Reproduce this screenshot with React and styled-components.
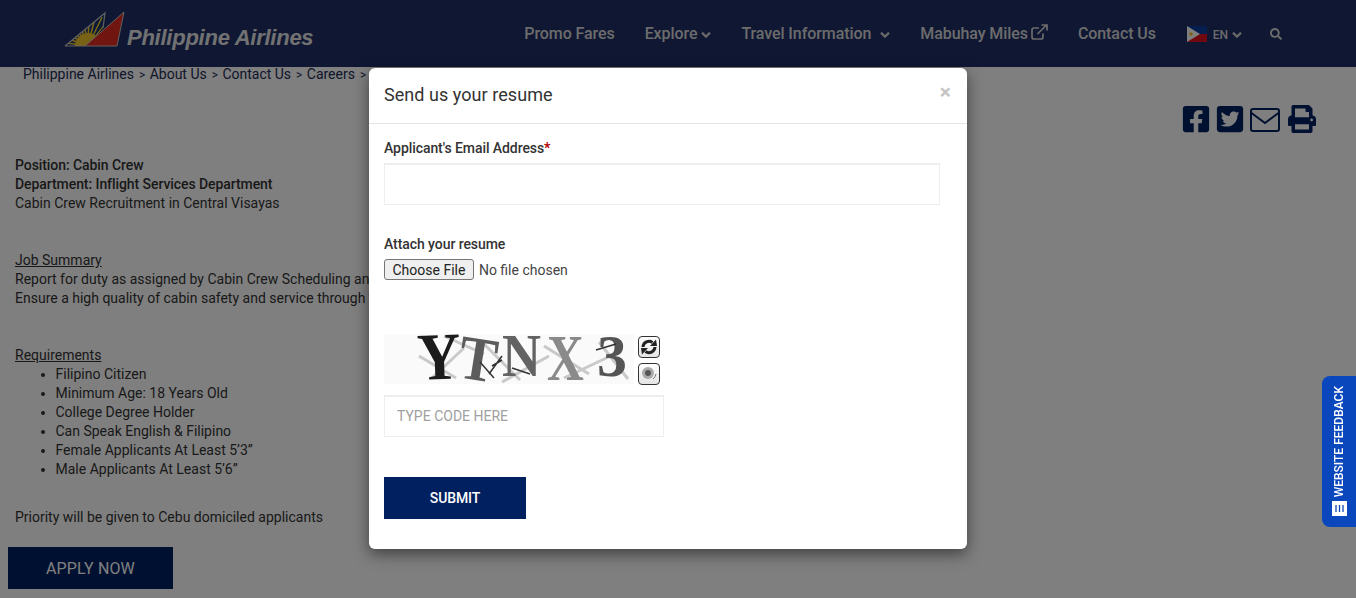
import React from "react";
import styled, { createGlobalStyle } from "styled-components";
import { FaChevronDown, FaSearch, FaFacebookSquare, FaTwitterSquare, FaPrint } from "react-icons/fa";

const GlobalStyle = createGlobalStyle`
  html, body {
    margin: 0;
    height: 100%;
    overflow: hidden;
    background: #fff;
  }
  body {
    color: #333;
    font-family: Roboto, "Liberation Sans", sans-serif;
    font-size: 14px;
    line-height: 19px;
  }
`;

const Page = styled.div`
  height: 598px;
  overflow: hidden;
  position: relative;
`;

const Header = styled.header`
  align-items: center;
  background: #1f2f66;
  display: flex;
  height: 67px;
  justify-content: space-between;
  padding: 0 74px 0 64px;
`;

const Logo = styled.div`
  align-items: flex-end;
  display: flex;
  margin-top: -9px;
`;

const LogoText = styled.span`
  color: #e4e4e4;
  font-family: "Liberation Sans", Arial, sans-serif;
  font-size: 22px;
  font-style: italic;
  font-weight: 700;
  letter-spacing: -0.25px;
  line-height: 24px;
  margin: 0 0 -3px 1px;
`;

const Nav = styled.nav`
  align-items: center;
  display: flex;
`;

const NavItem = styled.a`
  align-items: center;
  color: #d8d8d8;
  display: flex;
  font-size: 16px;
  font-weight: 500;
  letter-spacing: -0.08px;
  line-height: 22px;
  margin-left: ${props => props.$gap}px;
  white-space: nowrap;
`;

const Caret = styled(FaChevronDown)`
  font-size: 10px;
  margin-left: ${props => props.$gap || 4}px;
  margin-top: 3px;
  stroke: currentColor;
  stroke-width: 40;
`;

const Lang = styled.span`
  font-size: 12px;
  margin-left: 6px;
  margin-top: 2px;
`;

const SearchIcon = styled(FaSearch)`
  font-size: 12px;
`;

const Breadcrumb = styled.div`
  color: #222c55;
  display: flex;
  height: 19px;
  margin-top: -2px;
  padding-left: 23px;
  white-space: nowrap;
`;

const Crumb = styled.span`
  &:not(:first-child)::before {
    content: ">";
    font-size: 12px;
    margin: 0 4.4px 0 5px;
  }
`;

const ShareBar = styled.div`
  align-items: center;
  color: #002060;
  display: flex;
  gap: 4px;
  height: 30px;
  justify-content: flex-end;
  margin-top: 20px;
  padding-right: 40px;
`;

const ShareEnvelope = styled.svg`
  margin: 1px 4px 0 1px;
`;

const Article = styled.div`
  margin-top: 22px;
  padding-left: 15px;
  width: 900px;
`;

const Strong = styled.div`
  font-weight: 500;
  letter-spacing: -0.07px;
`;

const Section = styled.div`
  margin-top: ${props => props.$top}px;
`;

const Underlined = styled.div`
  text-decoration: underline;
`;

const List = styled.ul`
  list-style: disc;
  margin: 0;
  padding-left: 40.5px;
`;

const ApplyButton = styled.button`
  background: #002060;
  border: none;
  color: #fff;
  display: block;
  font-family: inherit;
  font-size: 16px;
  font-weight: 400;
  height: 42px;
  letter-spacing: 0.15px;
  margin: 20px 0 0 -7px;
  width: 165px;
`;

const Backdrop = styled.div`
  background: rgba(0, 0, 0, 0.5);
  inset: 0;
  position: absolute;
`;

const Modal = styled.div`
  background: #fff;
  border-radius: 6px;
  box-shadow: 0 5px 15px rgba(0, 0, 0, 0.5);
  height: 481px;
  left: 369px;
  position: absolute;
  top: 68px;
  width: 598px;
`;

const ModalHeader = styled.div`
  align-items: flex-start;
  border-bottom: 1px solid #e5e5e5;
  box-sizing: border-box;
  display: flex;
  height: 56px;
  justify-content: space-between;
  padding: 15px 15px 0;
`;

const Title = styled.h4`
  font-size: 18px;
  font-weight: 400;
  letter-spacing: 0.05px;
  line-height: 24px;
  margin: 0;
`;

const Close = styled.span`
  color: #c4c4c4;
  font-size: 21px;
  font-weight: 700;
  line-height: 18px;
  margin-right: 1px;
`;

const ModalBody = styled.form`
  padding: 15px;
`;

const Label = styled.label`
  color: #333;
  display: block;
  font-weight: 500;
  letter-spacing: -0.07px;
  line-height: 19px;
  margin-bottom: 5px;
`;

const Required = styled.span`
  color: #b00000;
  font-weight: 700;
`;

const TextInput = styled.input`
  border: 1px solid #eee;
  border-top-width: 2px;
  box-sizing: border-box;
  color: #333;
  display: block;
  font-family: inherit;
  font-size: 14px;
  height: 42px;
  padding: 0 12px 2px;
  width: ${props => props.$width}px;

  &::placeholder {
    color: #a0a0a0;
  }
`;

const FileInput = styled.input`
  color: #444;
  display: block;
  font-family: inherit;
  font-size: 14px;

  &::file-selector-button {
    background: #efefef;
    border: 1px solid #767676;
    border-radius: 3px;
    color: #222;
    font-family: inherit;
    font-size: 14px;
    height: 21px;
    margin-right: 5px;
    padding: 0 7.5px;
  }
`;

const CaptchaRow = styled.div`
  display: flex;
  margin: 54px 0 10px;
`;

const CaptchaButtons = styled.div`
  display: flex;
  flex-direction: column;
  gap: 5px;
  margin: 2px 0 0 4px;
`;

const CaptchaButton = styled.div`
  align-items: center;
  background: linear-gradient(#fff, #e4e4e4);
  border: 1px solid #333;
  border-radius: 4px;
  box-sizing: border-box;
  display: flex;
  height: 22px;
  justify-content: center;
  width: 22px;
`;

const SubmitButton = styled.button`
  background: #002060;
  border: none;
  color: #fff;
  display: block;
  font-family: inherit;
  font-size: 14px;
  font-weight: 500;
  height: 42px;
  letter-spacing: -0.1px;
  margin-top: 40px;
  width: 142px;
`;

const FeedbackTab = styled.div`
  align-items: center;
  background: #0a47bd;
  border-radius: 8px 0 0 8px;
  bottom: 71px;
  box-sizing: border-box;
  color: #fff;
  display: flex;
  flex-direction: column-reverse;
  gap: 4px;
  height: 151px;
  padding-bottom: 11px;
  position: absolute;
  right: 0;
  width: 34px;
`;

const FeedbackText = styled.span`
  font-size: 12px;
  font-weight: 500;
  transform: rotate(180deg);
  white-space: nowrap;
  writing-mode: vertical-rl;
`;

const rayAngles = [188, 200, 212, 224, 236, 248, 260, 272, 284, 296, 308];

const LogoMark = () => (
  <svg width="62" height="36" viewBox="0 0 62 36">
    <defs>
      <clipPath id="logo-left">
        <path d="M1 35 L41 2 L39 17 L24 35 Z" />
      </clipPath>
    </defs>
    <path d="M1 35 L41 2 L39 17 L24 35 Z" fill="#12306e" />
    <g clipPath="url(#logo-left)">
      {rayAngles.map(angle => (
        <line
          key={angle}
          x1="24"
          y1="35"
          x2={24 + 32 * Math.cos((angle * Math.PI) / 180)}
          y2={35 + 32 * Math.sin((angle * Math.PI) / 180)}
          stroke="#f1c52c"
          strokeWidth="1.6"
        />
      ))}
      <circle cx="24" cy="35" r="13" fill="#f1c52c" />
    </g>
    <path d="M1 35 L41 2 L39 17" fill="none" stroke="#c4c4c4" strokeWidth="1.2" />
    <path d="M21 35 L60 1 L53 35 Z" fill="#e32b22" stroke="#c4c4c4" strokeWidth="1" />
    <path d="M1 35 H21" stroke="#c4c4c4" strokeWidth="1" />
  </svg>
);

const Flag = () => (
  <svg width="20" height="16" viewBox="0 0 20 16">
    <rect width="20" height="8" fill="#0a3ca0" />
    <rect y="8" width="20" height="8" fill="#e01020" />
    <path d="M0 0 L13 8 L0 16 Z" fill="#fff" />
    <circle cx="4" cy="8" r="1.8" fill="#f4c22b" />
  </svg>
);

const ExternalLink = () => (
  <svg width="17" height="16" viewBox="0 0 17 16" fill="none" stroke="currentColor" strokeWidth="1.7" style={{ marginLeft: 3, marginTop: -4 }}>
    <path d="M12 9.5 V13 a2 2 0 0 1 -2 2 H3 a2 2 0 0 1 -2 -2 V6 a2 2 0 0 1 2 -2 H8" />
    <path d="M6.5 10 L15 1.5 M10.5 1 H16 V6.5" />
  </svg>
);

const EnvelopeIcon = () => (
  <ShareEnvelope width="30" height="24" viewBox="0 0 30 24" fill="none" stroke="currentColor" strokeWidth="2">
    <rect x="1" y="1" width="28" height="22" rx="2" />
    <path d="M1.5 5 L15 15 L28.5 5" />
  </ShareEnvelope>
);

const captchaLetters = [
  { char: "Y", x: 34, y: 46, sx: 1, sy: 1.12, rotate: -2, fill: "#1a1a1a" },
  { char: "T", x: 72, y: 43, sx: 0.95, sy: 1.05, rotate: 9, fill: "#5c5c5c" },
  { char: "N", x: 118, y: 42, sx: 0.9, sy: 1.02, rotate: 0, fill: "#636363" },
  { char: "X", x: 163, y: 46, sx: 0.85, sy: 1.08, rotate: 0, fill: "#8a8a8a" },
  { char: "3", x: 213, y: 42, sx: 1, sy: 0.98, rotate: 0, fill: "#555" }
];

const Captcha = () => (
  <svg width="250" height="50" viewBox="0 0 250 50" style={{ overflow: "visible" }}>
    <defs>
      <filter id="soft">
        <feGaussianBlur stdDeviation="0.4" />
      </filter>
    </defs>
    <rect width="250" height="50" fill="#fafafa" />
    <g filter="url(#soft)">
      <g stroke="#c9c9c9" strokeWidth="3" fill="none">
        <path d="M35 22 L72 44 M48 44 L80 14 M100 10 L136 46 M118 48 L165 22 M160 12 L205 40 M180 44 L235 18 M215 8 L244 45 M60 2 L100 20" />
      </g>
      <g fontFamily="Liberation Serif, serif" fontWeight="700" fontSize="60">
        {captchaLetters.map(letter => (
          <text
            key={letter.char}
            fill={letter.fill}
            transform={`translate(${letter.x} ${letter.y}) rotate(${letter.rotate}) scale(${letter.sx} ${letter.sy})`}
          >
            {letter.char}
          </text>
        ))}
      </g>
      <path d="M96 28 L110 44 M128 34 L146 40 M232 10 L212 16 M118 22 L105 40 M108 32 L118 26" stroke="#333" strokeWidth="1.5" />
    </g>
  </svg>
);

const RefreshIcon = () => (
  <svg width="18" height="18" viewBox="0 0 18 18" fill="none" stroke="#222" strokeWidth="3">
    <path d="M3 9 A6 6 0 0 1 12.5 4.5" />
    <path d="M15 9 A6 6 0 0 1 5.5 13.5" />
    <path d="M10 8 L17 8 L16 1.5 Z" fill="#222" stroke="none" />
    <path d="M8 10 L1 10 L2 16.5 Z" fill="#222" stroke="none" />
  </svg>
);

const AudioIcon = () => (
  <svg width="18" height="18" viewBox="0 0 18 18">
    <circle cx="8" cy="8" r="6" fill="#aaa" />
    <circle cx="8" cy="8" r="3" fill="#555" />
    <path d="M13 14 A8 8 0 0 0 16 9" stroke="#777" fill="none" />
  </svg>
);

const FormIcon = () => (
  <svg width="15" height="15" viewBox="0 0 15 15">
    <rect width="15" height="15" fill="#fff" />
    <path d="M4 4 V11 M7.5 4 V11 M11 4 V11" stroke="#0a47bd" strokeWidth="1.3" />
  </svg>
);

const requirements = [
  "Filipino Citizen",
  "Minimum Age: 18 Years Old",
  "College Degree Holder",
  "Can Speak English & Filipino",
  "Female Applicants At Least 5’3”",
  "Male Applicants At Least 5’6”"
];

const App = () => (
  <Page>
    <GlobalStyle />
    <Header>
      <Logo>
        <LogoMark />
        <LogoText>Philippine Airlines</LogoText>
      </Logo>
      <Nav>
        <NavItem $gap={0}>Promo Fares</NavItem>
        <NavItem $gap={30}>Explore<Caret /></NavItem>
        <NavItem $gap={30}>Travel Information<Caret $gap={9} /></NavItem>
        <NavItem $gap={30}>Mabuhay Miles<ExternalLink /></NavItem>
        <NavItem $gap={30}>Contact Us</NavItem>
        <NavItem $gap={31}><Flag /><Lang>EN</Lang><Caret /></NavItem>
        <NavItem $gap={28}><SearchIcon /></NavItem>
      </Nav>
    </Header>
    <Breadcrumb>
      <Crumb>Philippine Airlines</Crumb>
      <Crumb>About Us</Crumb>
      <Crumb>Contact Us</Crumb>
      <Crumb>Careers</Crumb>
      <Crumb>Cabin Crew</Crumb>
    </Breadcrumb>
    <ShareBar>
      <FaFacebookSquare size={30} />
      <FaTwitterSquare size={30} />
      <EnvelopeIcon />
      <FaPrint size={28} />
    </ShareBar>
    <Article>
      <Strong>Position: Cabin Crew</Strong>
      <Strong>Department: Inflight Services Department</Strong>
      <div>Cabin Crew Recruitment in Central Visayas</div>
      <Section $top={38}>
        <Underlined>Job Summary</Underlined>
        <div>Report for duty as assigned by Cabin Crew Scheduling and perform all duties on board</div>
        <div>Ensure a high quality of cabin safety and service through the flight</div>
      </Section>
      <Section $top={38}>
        <Underlined>Requirements</Underlined>
        <List>
          {requirements.map(item => (
            <li key={item}>{item}</li>
          ))}
        </List>
      </Section>
      <Section $top={29}>Priority will be given to Cebu domiciled applicants</Section>
      <ApplyButton>APPLY NOW</ApplyButton>
    </Article>
    <Backdrop />
    <Modal>
      <ModalHeader>
        <Title>Send us your resume</Title>
        <Close>×</Close>
      </ModalHeader>
      <ModalBody>
        <Label>Applicant's Email Address<Required>*</Required></Label>
        <TextInput type="text" $width={556} />
        <Section $top={30}>
          <Label>Attach your resume</Label>
          <FileInput type="file" />
        </Section>
        <CaptchaRow>
          <Captcha />
          <CaptchaButtons>
            <CaptchaButton><RefreshIcon /></CaptchaButton>
            <CaptchaButton><AudioIcon /></CaptchaButton>
          </CaptchaButtons>
        </CaptchaRow>
        <TextInput type="text" placeholder="TYPE CODE HERE" $width={280} />
        <SubmitButton type="button">SUBMIT</SubmitButton>
      </ModalBody>
    </Modal>
    <FeedbackTab>
      <FormIcon />
      <FeedbackText>WEBSITE FEEDBACK</FeedbackText>
    </FeedbackTab>
  </Page>
);

export default App;
